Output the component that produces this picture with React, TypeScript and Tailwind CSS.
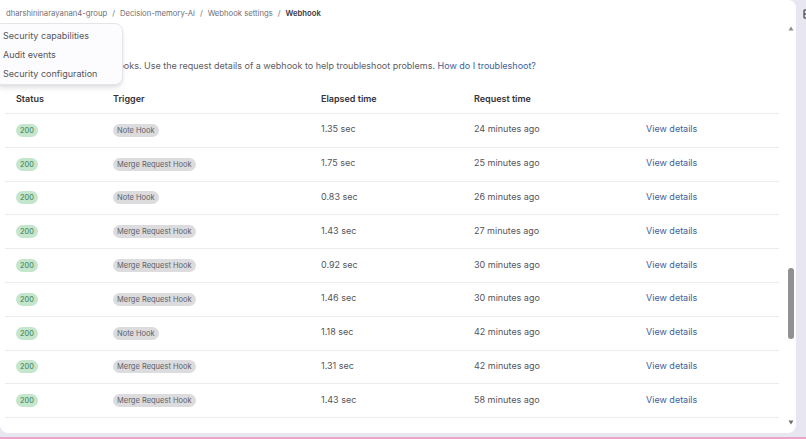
const rows = [
  { trigger: "Note Hook", elapsed: "1.35 sec", when: "24 minutes ago" },
  { trigger: "Merge Request Hook", elapsed: "1.75 sec", when: "25 minutes ago" },
  { trigger: "Note Hook", elapsed: "0.83 sec", when: "26 minutes ago" },
  { trigger: "Merge Request Hook", elapsed: "1.43 sec", when: "27 minutes ago" },
  { trigger: "Merge Request Hook", elapsed: "0.92 sec", when: "30 minutes ago" },
  { trigger: "Merge Request Hook", elapsed: "1.46 sec", when: "30 minutes ago" },
  { trigger: "Note Hook", elapsed: "1.18 sec", when: "42 minutes ago" },
  { trigger: "Merge Request Hook", elapsed: "1.31 sec", when: "42 minutes ago" },
  { trigger: "Merge Request Hook", elapsed: "1.43 sec", when: "58 minutes ago" },
];

const cols = "grid grid-cols-[97px_208px_153px_172px_1fr] items-center pl-[11px]";

export default function App() {
  return (
    <div className="relative h-[439px] w-[806px] overflow-hidden bg-[#e8e6f1] font-['Inter',sans-serif] text-[#55545b]">
      {/* white panel */}
      <div className="flex h-[433px] w-[796px] rounded-tr-lg rounded-b-lg bg-white">
        <div className="w-[779px] shrink-0 pl-[5px]">
          <div className="flex h-[27px] items-center gap-[5px] pl-px text-[7.7px] text-[#6f6e76]">
            <span>dharshininarayanan4-group</span>
            <span>/</span>
            <span>Decision-memory-Ai</span>
            <span>/</span>
            <span>Webhook settings</span>
            <span>/</span>
            <span className="font-semibold text-[#3a383f]">Webhook</span>
          </div>
          <p className="mt-[31px] h-[15px] pl-[13px] text-[9px] leading-[15px] whitespace-nowrap text-[#5d5c63]">
            Recent events for webhooks. Use the request details of a webhook to help troubleshoot problems.{" "}
            <span className="text-[#3d6199]">How do I troubleshoot?</span>
          </p>
          <div className={`${cols} mt-[11px] h-[30px] border-b border-[#ececef] text-[9px] font-semibold text-[#333238]`}>
            <span>Status</span>
            <span>Trigger</span>
            <span>Elapsed time</span>
            <span>Request time</span>
            <span />
          </div>
          {rows.map((r, i) => (
            <div key={i} className={`${cols} h-[33.8px] border-b border-[#ececef] pb-[2.5px] text-[9px]`}>
              <span className="flex pt-[2.5px]">
                <span className="rounded-full bg-[#c3e6cd] px-[4px] text-[7.4px] leading-[13px] text-[#3d7a52]">200</span>
              </span>
              <span className="flex pt-[2.5px]">
                <span className="rounded-full bg-[#dcdcde] px-[4px] text-[7.5px] leading-[13px] text-[#606066]">{r.trigger}</span>
              </span>
              <span>{r.elapsed}</span>
              <span>{r.when}</span>
              <span className="text-[#3d6199]">View details</span>
            </div>
          ))}
        </div>
        {/* scrollbar */}
        <div className="flex w-[17px] flex-col items-center pt-[26px] pb-[8px] pl-[7px]">
          <svg width="6" height="5" viewBox="0 0 6 5" className="shrink-0">
            <path d="M3 0.5 L5.5 4.5 L0.5 4.5 Z" fill="#8d8d92" />
          </svg>
          <div className="mt-[237px] h-[71px] w-[6px] shrink-0 rounded-full bg-[#8f8f94]" />
          <div className="flex-1" />
          <svg width="6" height="5" viewBox="0 0 6 5" className="shrink-0">
            <path d="M3 4.5 L5.5 0.5 L0.5 0.5 Z" fill="#6e6e73" />
          </svg>
        </div>
      </div>
      {/* bottom strip */}
      <div className="absolute inset-x-0 bottom-0 h-[2px] bg-[#e9a6c8]" />
      {/* dropdown menu */}
      <div className="absolute top-[23px] left-[-6px] flex h-[62px] w-[129px] flex-col justify-center gap-[4.5px] rounded-lg border border-[#e6e5ec] bg-[#fcfcfe] pt-[2px] pl-[8px] text-[9px] text-[#55545b] shadow-md">
        <span className="leading-[14.5px]">Security capabilities</span>
        <span className="leading-[14.5px]">Audit events</span>
        <span className="leading-[14.5px]">Security configuration</span>
      </div>
      {/* window edge glyph */}
      <svg width="4" height="10" viewBox="0 0 4 10" className="absolute top-[9px] left-[803px]">
        <path d="M3.5 1 H1 V9 H3.5 M1 5 H3.5" fill="none" stroke="#26262a" strokeWidth="1" />
      </svg>
    </div>
  );
}
